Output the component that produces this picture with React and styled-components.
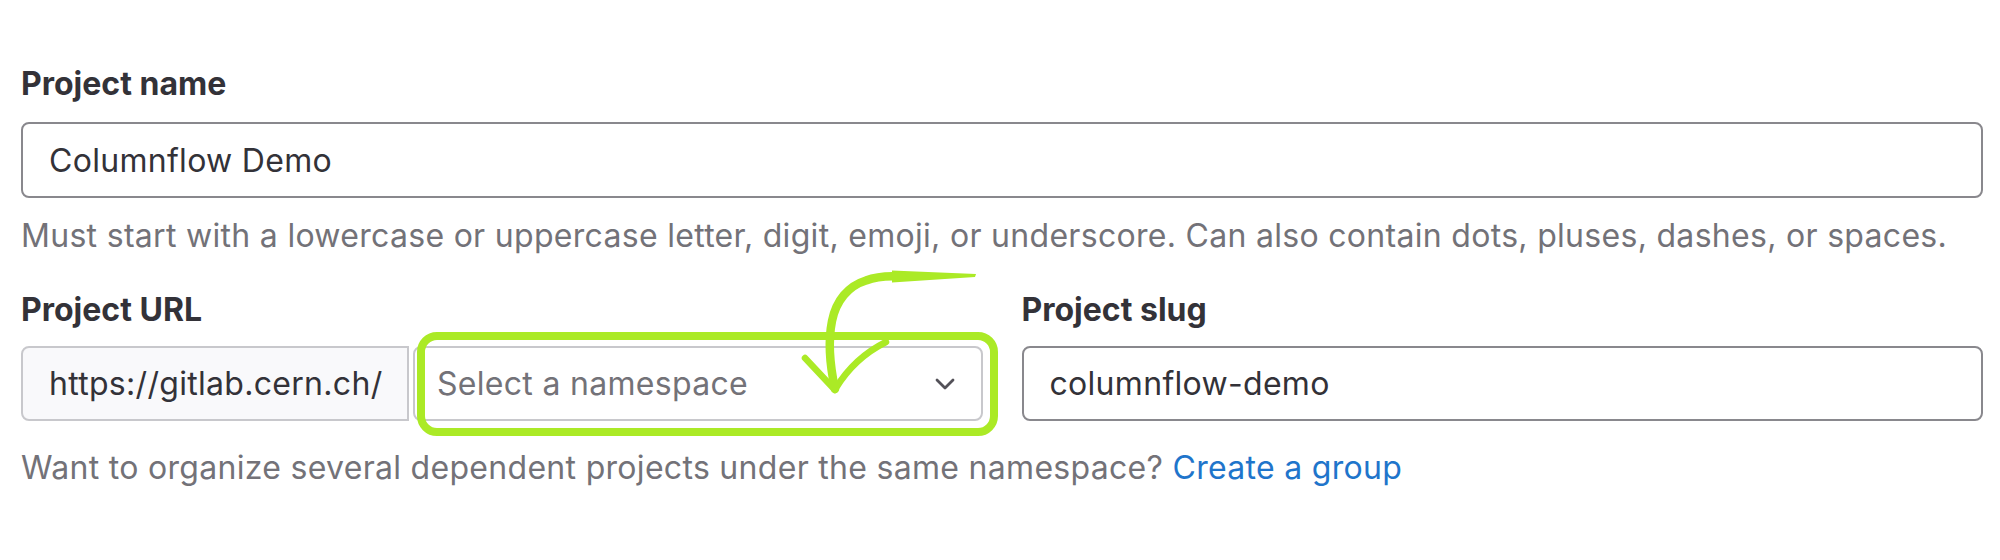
import React from 'react';
import styled, { createGlobalStyle } from 'styled-components';

const GlobalStyle = createGlobalStyle`
  html, body {
    margin: 0;
    padding: 0;
    background: #fff;
  }
  body {
    font-family: Inter, "Noto Sans", sans-serif;
    color: #333238;
  }
`;

const Page = styled.main`
  position: relative;
  box-sizing: border-box;
  width: 2000px;
  height: 560px;
  padding: 65px 17px 0 21px;
  background: #fff;
`;

const Label = styled.label`
  display: block;
  font-size: 32px;
  line-height: 38px;
  font-weight: 700;
  color: #333238;
  margin-bottom: ${(p) => p.$gap || 19}px;
`;

const TextInput = styled.div`
  box-sizing: border-box;
  height: ${(p) => p.$h || 76}px;
  display: flex;
  align-items: center;
  padding: 0 26px;
  border: 2px solid #89888d;
  border-radius: 8px;
  font-size: 32px;
  letter-spacing: 0.3px;
  color: #333238;
  background: #fff;
`;

const Help = styled.p`
  margin: ${(p) => p.$top}px 0 0;
  font-size: 32px;
  letter-spacing: 0.3px;
  line-height: 38px;
  color: #737278;
`;

const Link = styled.a`
  color: #1f75cb;
  text-decoration: none;
`;

const Columns = styled.div`
  display: grid;
  grid-template-columns: 1fr 1fr;
  column-gap: 39px;
  margin-top: 36px;
`;

const InputGroup = styled.div`
  display: flex;
  gap: 4px;
  height: 75px;
`;

const Prefix = styled.div`
  box-sizing: border-box;
  width: 388px;
  display: flex;
  align-items: center;
  padding: 0 26px;
  border: 2px solid #c8c8cc;
  border-radius: 8px 0 0 8px;
  background: #f9f9fb;
  font-size: 32px;
  letter-spacing: 0.3px;
  color: #333238;
  white-space: nowrap;
`;

const SelectWrap = styled.div`
  position: relative;
  flex: 1;
  display: flex;
`;

const Select = styled.div`
  box-sizing: border-box;
  flex: 1;
  display: flex;
  align-items: center;
  justify-content: space-between;
  padding: 0 26px 0 22px;
  border: 2px solid #c8c8cc;
  border-radius: 8px;
  font-size: 32px;
  letter-spacing: 0.3px;
  color: #737278;
`;

/* hand-drawn highlight around the namespace select */
const Highlight = styled.div`
  position: absolute;
  left: 4px;
  right: -15px;
  top: -14px;
  bottom: -15px;
  border: 8px solid #abea26;
  border-radius: 20px;
  pointer-events: none;
`;

const Arrow = styled.svg`
  position: absolute;
  left: 780px;
  top: 261px;
  width: 220px;
  height: 140px;
  overflow: visible;
  pointer-events: none;
`;

const Chevron = () => (
  <svg width="20" height="12" viewBox="0 0 20 12">
    <path d="M2 2 L10 10 L18 2" fill="none" stroke="#535158" strokeWidth="2.8" strokeLinecap="round" strokeLinejoin="round" />
  </svg>
);

export default function App() {
  return (
    <>
      <GlobalStyle />
      <Page>
        <Label>Project name</Label>
        <TextInput>Columnflow Demo</TextInput>
        <Help $top={19}>
          Must start with a lowercase or uppercase letter, digit, emoji, or underscore. Can also contain dots, pluses, dashes, or spaces.
        </Help>

        <Columns>
          <div>
            <Label $gap={17}>Project URL</Label>
            <InputGroup>
              <Prefix>https://gitlab.cern.ch/</Prefix>
              <SelectWrap>
                <Select>
                  <span>Select a namespace</span>
                  <Chevron />
                </Select>
                <Highlight />
              </SelectWrap>
            </InputGroup>
          </div>
          <div>
            <Label $gap={17}>Project slug</Label>
            <TextInput $h={75}>columnflow-demo</TextInput>
          </div>
        </Columns>

        <Help $top={28}>
          Want to organize several dependent projects under the same namespace? <Link href="#">Create a group</Link>
        </Help>

        <Arrow viewBox="0 0 220 140">
          <path d="M112 9.5 L196 13 L195 16 L112 21.5 Z" fill="#abea26" />
          <path
            d="M122 15.5 C108 14.5 96 15.5 86 19.5 C68 25 56 40 52 60 C48 80 50 105 55 128"
            fill="none"
            stroke="#abea26"
            strokeWidth="8.5"
            strokeLinecap="round"
          />
          <path d="M25 97 L55 129" fill="none" stroke="#abea26" strokeWidth="6.5" strokeLinecap="round" />
          <path d="M106 81 C88 90 70 104 56 127" fill="none" stroke="#abea26" strokeWidth="6.5" strokeLinecap="round" />
        </Arrow>
      </Page>
    </>
  );
}
